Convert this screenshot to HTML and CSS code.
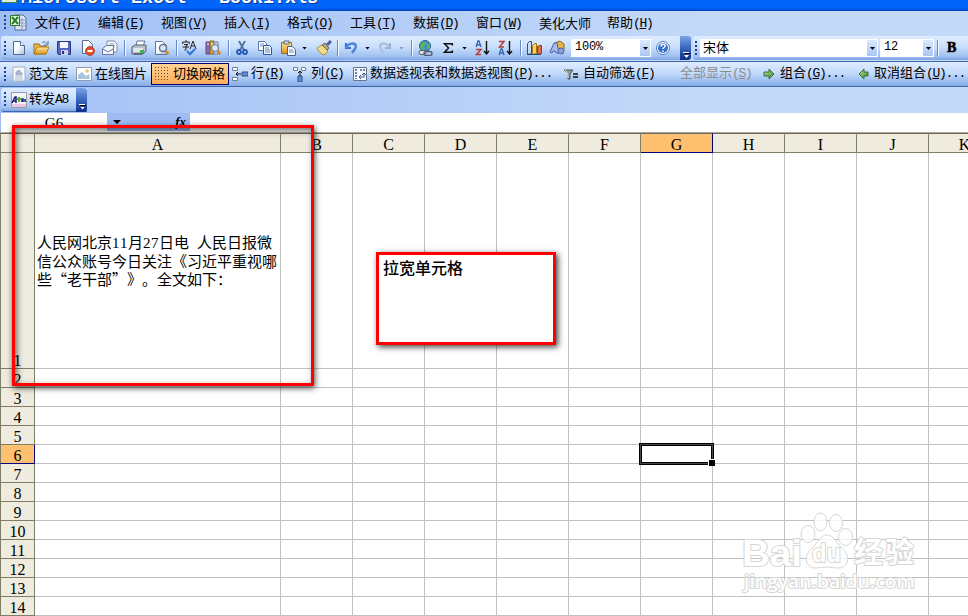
FILE: index.html
```html
<!DOCTYPE html>
<html lang="zh-CN">
<head>
<meta charset="utf-8">
<title>Microsoft Excel - Book1.xls</title>
<link rel="stylesheet" href="styles.css">
</head>
<body>
<svg width="0" height="0" class="defs">
  <defs>
    <linearGradient id="page" x1="0" y1="0" x2="1" y2="1"><stop offset=".4" stop-color="#fff"/><stop offset="1" stop-color="#a9bede"/></linearGradient>
    <linearGradient id="gold" x1="0" y1="0" x2="0" y2="1"><stop offset="0" stop-color="#ffe79a"/><stop offset="1" stop-color="#dc941e"/></linearGradient>
    <linearGradient id="arrow" x1="0" y1="0" x2="1" y2="1"><stop offset="0" stop-color="#b4dca0"/><stop offset="1" stop-color="#3a8a2a"/></linearGradient>
  </defs>
</svg>
<div class="window">
  <header class="title"><span class="title-icon"></span><span class="title-text">Microsoft Excel - Book1.xls</span></header>

  <nav class="menu">
    <i class="grip"></i>
    <svg class="book" width="18" height="18" viewBox="0 0 18 18"><path d="M6 1h8l3 3v12H6z" fill="#dce6f6" stroke="#5a6c94"/><path d="M10 6h6M10 9h6M10 12h6M13 4v11" stroke="#8a9cc2"/><path d="M1.500 1.500h9v10h-9z" fill="#eaf6e6" stroke="#2c7a2c"/><path d="M3 3l6 7M9 3l-6 7" stroke="#238023" stroke-width="2"/></svg>
    <span class="m">文件<b>(<u>F</u>)</b></span><span class="m">编辑<b>(<u>E</u>)</b></span><span class="m">视图<b>(<u>V</u>)</b></span><span class="m">插入<b>(<u>I</u>)</b></span><span class="m">格式<b>(<u>O</u>)</b></span><span class="m">工具<b>(<u>T</u>)</b></span><span class="m">数据<b>(<u>D</u>)</b></span><span class="m">窗口<b>(<u>W</u>)</b></span><span class="m wide">美化大师</span><span class="m">帮助<b>(<u>H</u>)</b></span>
  </nav>

  <div class="bars">
    <div class="bar standard">
      <i class="grip"></i>
      <div class="tools">
        <svg viewBox="0 0 16 16"><path d="M1.500 1.500h7l4 4v9h-11z" fill="url(#page)" stroke="#536a94"/><path d="M8.500 1.500v4h4" fill="#fff" stroke="#536a94"/></svg>
        <svg viewBox="0 0 16 16"><path d="M1 14V4h5l1 2h6v8z" fill="#f0bd4c" stroke="#9c6c10"/><path d="M1 14l3-7h12l-3 7z" fill="url(#gold)" stroke="#b07c1c"/><path d="M9 3c2-2 4-1 5 1M15 1v4h-4" fill="none" stroke="#4f6f9c"/></svg>
        <svg viewBox="0 0 16 16"><path d="M.500 1.500h13v13h-12l-1-1z" fill="#5967c0" stroke="#2c3480"/><path d="M3 2h8v6H3z" fill="#f4f6ff"/><path d="M4 10h7v5H4z" fill="#ccd2ec"/><path d="M5 11h2v3H5z" fill="#29306c"/></svg>
        <svg viewBox="0 0 16 16"><path d="M1.500 .500h6l4 4v9h-10z" fill="url(#page)" stroke="#5a6a8a"/><circle cx="9" cy="11" r="4.300" fill="#e25424" stroke="#b42c10"/><path d="M6.500 11h5" stroke="#fff" stroke-width="2"/></svg>
        <svg viewBox="0 0 16 16"><path d="M5 6V1h7l3 3v8h-4" fill="#fff" stroke="#7e8ca8"/><path d="M7 4h5M7 6h6" stroke="#8e9cba"/><path d="M.500 8.500l4-3h7v9h-11z" fill="#f2f4fa" stroke="#68779a"/><path d="M1 9l5 3 5-3" fill="none" stroke="#68779a"/></svg>
        <i class="sep"></i>
        <svg viewBox="0 0 16 16"><path d="M5 6l1-5h8l-2 5" fill="#fff" stroke="#67799a"/><path d="M1 7l3-2h11v6l-3 3H1z" fill="#b8c0ca" stroke="#555e70"/><path d="M2 8h10v4H2z" fill="#e3e7ee"/><path d="M9 10h4v3H9z" fill="#3eb548"/><path d="M3 14h8" stroke="#444"/></svg>
        <svg viewBox="0 0 16 16"><path d="M1.500 1.500h7l4 4v9h-11z" fill="url(#page)" stroke="#60749a"/><circle cx="9" cy="8" r="3.500" fill="#d6eafc" stroke="#66758e" stroke-width="1.500"/><path d="M11.500 11l3 3" stroke="#cf8a2c" stroke-width="2.500"/></svg>
        <i class="sep"></i>
        <svg viewBox="0 0 16 16"><path d="M4 0v2M.700 4V2h6.500v2M2 4.500h4L4 6v4H2.500M.500 7h6.500M8 9l3-8 3 8M9 6h4" fill="none" stroke="#222" stroke-width="1"/><path d="M5 11l3 3 5-5" fill="none" stroke="#3b78d6" stroke-width="2.300"/></svg>
        <svg viewBox="0 0 16 16"><path d="M1 2h4v12H1z" fill="#8a6cb4" stroke="#5c4480"/><path d="M5 1h4v13H5z" fill="#d4a63c" stroke="#8c681c"/><path d="M9 2h4v12H9z" fill="#cfd8ec" stroke="#6c7ca4"/><path d="M2 4h2M6 4h2" stroke="#fff"/><circle cx="10" cy="8" r="3.500" fill="#d6eafc" stroke="#66758e"/><path d="M12.500 11l3 3" stroke="#cf8a2c" stroke-width="2.500"/></svg>
        <i class="sep"></i>
        <svg viewBox="0 0 16 16"><path d="M5 1l5 9M11 1L6 10" stroke="#53719e" stroke-width="1.800"/><circle cx="5" cy="12" r="2" fill="none" stroke="#2755b4" stroke-width="1.800"/><circle cx="11" cy="12" r="2" fill="none" stroke="#2755b4" stroke-width="1.800"/></svg>
        <svg viewBox="0 0 16 16"><path d="M1.500 1.500h6l2 2v7h-8z" fill="#fff" stroke="#5577ae"/><path d="M6.500 5.500h6l2 2v7h-8z" fill="#eef4ff" stroke="#31589c"/><path d="M3 4h4M3 6h3M8 8h4M8 10h5M8 12h5" stroke="#6a8cc4"/></svg>
        <svg viewBox="0 0 16 16"><path d="M1.500 2.500h10v11h-10z" fill="url(#gold)" stroke="#9a6c20"/><path d="M4 1h5v3H4z" fill="#d7dbe4" stroke="#636a78"/><path d="M7.500 6.500h5l3 3v6h-8z" fill="#f4f7ff" stroke="#46639a"/><path d="M9 10h4M9 12h5" stroke="#6a8cc4"/></svg>
        <i class="caret"></i>
        <svg viewBox="0 0 16 16"><path d="M0 8l5-3 6 6-4 4C4 14 2 12 0 8z" fill="#f4dc8a" stroke="#b48a34"/><path d="M5 5l3-2 4 5-2 2z" fill="#b8aa88" stroke="#756a4c"/><path d="M10 5l4-4" stroke="#525ea2" stroke-width="3"/></svg>
        <i class="sep"></i>
        <svg viewBox="0 0 16 16"><path d="M3 3v5h5" fill="none" stroke="#3c6fd0" stroke-width="2.200"/><path d="M3 8c2-5 9-6 10-2 0 3-2 4-4 7" fill="none" stroke="#5283dc" stroke-width="2.400"/></svg>
        <i class="caret"></i>
        <svg viewBox="0 0 16 16"><path d="M12 3v5H7" fill="none" stroke="#9cb0d0" stroke-width="2"/><path d="M12 8C10 3 3 2 2 6c0 3 2 4 3 7" fill="none" stroke="#a9bad8" stroke-width="2"/></svg>
        <i class="caret dim"></i>
        <i class="sep"></i>
        <svg viewBox="0 0 16 16"><circle cx="8" cy="6" r="5.500" fill="#428bd4" stroke="#2b5d9c"/><path d="M4 3l4-2 1 4-3 1 2 3-3 1-2-4zM10 3l3 2v4l-3-1z" fill="#5bb850"/><rect x="2" y="10.500" width="7" height="4" rx="2" fill="#dfe6f0" stroke="#515c6c"/><rect x="7" y="11.500" width="8" height="4" rx="2" fill="none" stroke="#515c6c" stroke-width="1.300"/></svg>
        <svg viewBox="0 0 16 16"><path d="M11.300 5.500V3.700H3.500L7.500 8l-4 4.300h7.800v-1.800" fill="none" stroke="#111" stroke-width="1.500"/></svg>
        <i class="caret"></i>
        <svg viewBox="0 0 16 16"><path d="M2 7l2-6h1l2 6M3 5h3" fill="none" stroke="#3566ae" stroke-width="1.300"/><path d="M2 9.500h5l-4.500 5H7" fill="none" stroke="#b43c34" stroke-width="1.500"/><path d="M12.500 1v13M10 11l2.500 3 2.500-3" fill="none" stroke="#111" stroke-width="1.400"/></svg>
        <svg viewBox="0 0 16 16"><path d="M2 1.500h5L2.500 7H7" fill="none" stroke="#b43c34" stroke-width="1.500"/><path d="M2 15l2-6h1l2 6M3 13h3" fill="none" stroke="#3566ae" stroke-width="1.300"/><path d="M12.500 1v13M10 11l2.500 3 2.500-3" fill="none" stroke="#111" stroke-width="1.400"/></svg>
        <i class="sep"></i>
        <svg viewBox="0 0 16 16"><path d="M1.500 3.500l2-2h2v12l-4 1z" fill="#c8dcf8" stroke="#2c4d92"/><path d="M6.500 5.500l2-2h2v10l-4 1z" fill="#f5d55a" stroke="#a67616"/><path d="M11.500 6.500l2-1h2v8l-4 1z" fill="#e26d40" stroke="#9c3818"/><path d="M1 14.500h14" stroke="#27457e"/></svg>
        <svg viewBox="0 0 16 16"><path d="M6 3l5-2 4 3v6l-5 3z" fill="#e2b34c" stroke="#8e6820"/><path d="M1 12l4-9h3l2 10H7l-1-2H4l-1 2z" fill="#aabbf0" stroke="#4e5fae"/><circle cx="12" cy="11" r="3" fill="#8c9ed8" stroke="#5666a4"/></svg>
        <div class="combo">100%<i class="drop"></i></div>
        <svg class="help" viewBox="0 0 16 16"><circle cx="8" cy="8" r="6.500" fill="#fff" stroke="#4d76c0"/><circle cx="8" cy="8" r="5" fill="#3570d0"/><path d="M6 6.500c0-3 4-3 4-.500 0 1.500-2 1.500-2 3M8 10.500v1.500" stroke="#fff" stroke-width="1.500" fill="none"/></svg>
      </div>
      <i class="more"></i>
    </div>
    <div class="bar format">
      <i class="grip"></i>
      <div class="combo font">宋体<i class="drop"></i></div>
      <div class="combo size">12<i class="drop"></i></div>
      <i class="sep"></i><span class="bold">B</span>
    </div>
  </div>

  <div class="commands">
    <i class="grip"></i>
    <div class="items">
      <svg viewBox="0 0 16 16"><path d="M1 1h12v14H1z" fill="#f8fafc" stroke="#a8b0ba"/><path d="M4 9V6l3-2 3 3v2zM3 11h8M3 13h8" fill="#a5bcd2" stroke="#90a6bc" stroke-width=".800"/></svg><span>范文库</span>
      <svg viewBox="0 0 16 16"><path d="M.500 1.500h15v13H.500z" fill="#fff" stroke="#8e9baa"/><path d="M2 13V9l4-3 4 4 3-2 1 5z" fill="#a8c6df"/><circle cx="11" cy="5" r="1.800" fill="#eec46e"/></svg><span>在线图片</span>
      <div class="active"><i class="dots"></i><span>切换网格</span></div>
      <svg viewBox="0 0 16 16"><path d="M.500 1.500h5v3h-5zM.500 11.500h5v3h-5z" fill="#fff" stroke="#6f8194"/><path d="M10 6h6v4h-6z" fill="#5b8fdc" stroke="#33507c"/><path d="M4 8h5M6 6L4 8l2 2" fill="none" stroke="#111"/></svg><span>行<b>(<u>R</u>)</b></span>
      <svg viewBox="0 0 16 16"><path d="M.500 1.500h4v3h-4zM8.500 1.500h4v3h-4z" fill="#fff" stroke="#6f8194"/><path d="M5 10h4v6H5z" fill="#5b8fdc" stroke="#33507c"/><path d="M7 5v5M5 7l2-2 2 2" fill="none" stroke="#111"/></svg><span>列<b>(<u>C</u>)</b></span>
      <svg viewBox="0 0 16 16"><path d="M.500 1.500h13v13H.500z" fill="#f4f8ff" stroke="#62748c"/><path d="M2 4h3M7 4h5M3 6v7" stroke="#6d84ac" stroke-width="2" stroke-dasharray="2 1"/><path d="M6 11h5V7M9 9l2-2 2 2M8 9l-2 2 2 2" fill="none" stroke="#3a5788"/></svg><span>数据透视表和数据透视图<b>(<u>P</u>)...</b></span>
      <svg viewBox="0 0 16 16"><path d="M1 4h9L7 8v5H5V8z" fill="#8d969a" stroke="#4e5658"/><path d="M2 4l3 4v4" fill="none" stroke="#eee"/><path d="M10 8h5M10 11h5" stroke="#111" stroke-width="1.500"/></svg><span>自动筛选<b>(<u>F</u>)</b></span>
      <span class="disabled">全部显示<b>(<u>S</u>)</b></span>
      <svg viewBox="0 0 16 16"><path d="M1 6h5V3l5 5-5 5v-3H1z" fill="url(#arrow)" stroke="#386c38"/></svg><span>组合<b>(<u>G</u>)...</b></span>
      <svg viewBox="0 0 16 16"><path d="M11 6H7V3L2 8l5 5v-3h4z" fill="url(#arrow)" stroke="#386c38"/></svg><span>取消组合<b>(<u>U</u>)...</b></span>
    </div>
  </div>

  <div class="extra">
    <div class="bar convert"><i class="grip"></i>
      <svg width="16" height="16" viewBox="0 0 16 16"><path d="M.500 .500h15v15H.500z" fill="#f4f2fa" stroke="#949aa8"/><path d="M1 12h14v3H1z" fill="#ecc4e4"/><path d="M1 11l3-6h1v6M2 9h3M11 10V7h1v3M14 10V7" fill="none" stroke="#1b1b80" stroke-width="1.500"/><path d="M8 5v5M6 7h4" stroke="#56b428" stroke-width="2"/></svg>
      <span>转发<b>A8</b></span><i class="more"></i></div>
  </div>

  <div class="formula"><div class="name">G6</div><div class="fx"><i class="caret big"></i><em>fx</em></div></div>

  <table class="sheet">
    <colgroup><col class="ch"><col class="ca"><col><col><col><col><col><col><col><col><col><col></colgroup>
    <tr class="head"><th></th><th>A</th><th>B</th><th>C</th><th>D</th><th>E</th><th>F</th><th class="on">G</th><th>H</th><th>I</th><th>J</th><th>K</th></tr>
    <tr class="tall"><th>1</th><td class="news">人民网北京<b>11</b>月<b>27</b>日电<b class="gap"></b>人民日报微<br>信公众账号今日关注《习近平重视哪<br>些“老干部”》。全文如下：</td>
      <td></td><td></td><td></td><td></td><td></td>
      <td></td><td></td><td></td><td></td><td></td></tr>
    <tr><th>2</th><td></td><td></td><td></td><td></td><td></td><td></td><td></td><td></td><td></td><td></td><td></td></tr>
    <tr><th>3</th><td></td><td></td><td></td><td></td><td></td><td></td><td></td><td></td><td></td><td></td><td></td></tr>
    <tr><th>4</th><td></td><td></td><td></td><td></td><td></td><td></td><td></td><td></td><td></td><td></td><td></td></tr>
    <tr><th>5</th><td></td><td></td><td></td><td></td><td></td><td></td><td></td><td></td><td></td><td></td><td></td></tr>
    <tr><th class="on">6</th><td></td><td></td><td></td><td></td><td></td><td></td>
      <td class="selected"><i class="cursor"></i></td>
      <td></td><td></td><td></td><td></td></tr>
    <tr><th>7</th><td></td><td></td><td></td><td></td><td></td><td></td><td></td><td></td><td></td><td></td><td></td></tr>
    <tr><th>8</th><td></td><td></td><td></td><td></td><td></td><td></td><td></td><td></td><td></td><td></td><td></td></tr>
    <tr><th>9</th><td></td><td></td><td></td><td></td><td></td><td></td><td></td><td></td><td></td><td></td><td></td></tr>
    <tr><th>10</th><td></td><td></td><td></td><td></td><td></td><td></td><td></td><td></td><td></td><td></td><td></td></tr>
    <tr><th>11</th><td></td><td></td><td></td><td></td><td></td><td></td><td></td><td></td><td></td><td></td><td></td></tr>
    <tr><th>12</th><td></td><td></td><td></td><td></td><td></td><td></td><td></td><td></td><td></td><td></td><td></td></tr>
    <tr><th>13</th><td></td><td></td><td></td><td></td><td></td><td></td><td></td><td></td><td></td><td></td><td></td></tr>
    <tr><th>14</th><td></td><td></td><td></td><td></td><td></td><td></td><td></td><td></td><td></td><td></td><td></td></tr>
  </table>

  <div class="mark region"></div>
  <div class="mark note">拉宽单元格</div>
  <svg class="watermark" width="180" height="86" viewBox="0 0 180 86">
    <g fill="#fff" fill-opacity=".8" stroke="#d6d6d6" stroke-width="1">
      <ellipse cx="68" cy="26" rx="7" ry="8.500"/><ellipse cx="80.500" cy="14" rx="6.500" ry="9"/><ellipse cx="96" cy="15" rx="6.500" ry="8.500"/><ellipse cx="105.500" cy="29" rx="7" ry="8.500"/>
      <path d="M87 27c7 0 9 8 15 13 9 8 7 20-4 20-5 0-7-1-11-1s-7 1-11 1c-11 0-13-12-4-20 6-5 8-13 15-13z"/>
    </g>
    <g fill="#fff" stroke="#d6d6d6">
      <text class="bai" x="2" y="58" textLength="60" lengthAdjust="spacingAndGlyphs">Bai</text>
      <text class="du" x="72" y="54" textLength="29" lengthAdjust="spacingAndGlyphs">du</text>
      <text class="jy" x="114" y="55" textLength="60">经验</text>
      <text class="url" x="4" y="80" textLength="171" lengthAdjust="spacingAndGlyphs">jingyan.baidu.com</text>
    </g>
  </svg>
</div>
</body>
</html>
```

FILE: styles.css
```css
* { box-sizing: border-box; }
body { margin: 0; overflow: hidden; }
.defs { position: absolute; }
.window {
  position: relative; width: 968px; height: 616px; overflow: hidden; background: #fff;
  color: #000; font: 13px/16px "Noto Sans CJK SC", sans-serif;
}
svg { display: block; flex: none; }
b { font-family: "Liberation Mono", monospace; font-weight: 400; letter-spacing: -1.3px; }
u { text-underline-offset: 1px; }
span { white-space: nowrap; }

.title { height: 11px; display: flex; overflow: hidden; background: linear-gradient(#0263f8 0, #0066fe 7px, #0050d8 10px, #0038b4 11px); }
.title-icon { width: 16px; height: 3px; margin-left: 1px; background: #dff0d8; border: solid #448844; border-width: 0 1px 1px; }
.title-text { margin: -11px 0 0 4px; color: #fff; font: bold 18.34px/20px "Liberation Mono", monospace; white-space: pre; text-shadow: 1px 1px #0a3a9c; }

.menu { height: 25px; display: flex; align-items: center; background: linear-gradient(90deg, #9fbef5, #c4daf9 75%); padding: 0 0 2px 4px; }
.menu .m { width: 63px; flex: none; }
.menu .m.wide { width: 68px; }
.book { margin: 0 8px 0 3px; }
.grip { flex: none; width: 2px; height: 15px; background: repeating-linear-gradient(#27408f 0 2px, transparent 2px 4px); }

.bars { height: 25px; display: flex; background: linear-gradient(90deg, #a4c1f5, #c4daf9 75%); }
.bar { height: 24px; display: flex; align-items: center; background: linear-gradient(#dfecff 0, #c9dffc 45%, #a0c1f2 85%, #7ba4e0); border-radius: 3px 0 0 3px; }
.standard { width: 688px; flex: none; margin-left: 1px; padding-left: 3px; }
.tools {
  display: grid; align-items: center; width: 668px; margin-left: 6px; flex: none;
  grid-template-columns: 21px 24px 24px 21px 22px 7px 23px 22px 6px 23px 23px 6px 23px 23px 22px 15px 20px 6px 22px 13px 21px 12px 6px 24px 21px 12px 23px 23px 6px 23px 22px 84px 16px;
}
.tools svg { width: 16px; height: 16px; }
.sep { width: 2px; height: 16px; background: linear-gradient(90deg, #6a8ccb 50%, #f1f7ff 50%); }
.caret { width: 5px; height: 3px; background: #000; clip-path: polygon(0 0, 100% 0, 50% 100%); }
.caret.dim { background: #8d9ab2; }
.caret.big { width: 8px; height: 4px; }
.combo { position: relative; width: 80px; height: 18px; background: #fff; padding-left: 4px; font: 12px/17px "Liberation Mono", monospace; letter-spacing: -.2px; }
.drop { position: absolute; right: 1px; top: 1px; width: 10px; height: 16px; background: linear-gradient(#dceafe, #a9c6f2); }
.drop::after { content: ""; position: absolute; left: 3px; top: 7px; width: 5px; height: 3px; background: #000; clip-path: polygon(0 0, 100% 0, 50% 100%); }
.more { position: relative; width: 11px; height: 24px; margin-left: auto; flex: none; background: linear-gradient(#7aa3e8, #3966bc 50%, #0b2f8a); border-radius: 0 3px 3px 0; }
.more::before { content: ""; position: absolute; left: 3px; bottom: 7px; width: 6px; height: 1px; background: #fff; box-shadow: 1px 1px #000; }
.more::after { content: ""; position: absolute; left: 4px; bottom: 2px; width: 5px; height: 3px; background: #fff; clip-path: polygon(0 0, 100% 0, 50% 100%); }
.format { flex: 1; margin-left: 4px; padding-left: 1px; }
.format .combo.font { width: 178px; margin: 0 2px 0 3px; padding-left: 3px; font: 13px/15px "Noto Sans CJK SC", sans-serif; letter-spacing: 0; }
.format .combo.size { width: 54px; margin-right: 3px; }
.format .grip { margin-left: 1px; }
.bold { margin-left: 8px; font: 900 14px/16px "Liberation Serif", serif; -webkit-text-stroke: .6px #000; }

.commands { height: 26px; display: flex; align-items: center; padding-left: 4px; border: solid #3f65ad; border-width: 1px 0; background: linear-gradient(#dfecff, #c4dbfc 45%, #9dbef1 80%, #86abe4); }
.items {
  display: grid; align-items: center; margin-left: 6px;
  grid-template-columns: 17px 47px 19px 56px 81px 19px 42px 18px 42px 17px 193px 20px 97px 83px 17px 77px 17px 90px;
}
.items svg { width: 16px; height: 16px; }
.items span, .convert span { padding-bottom: 2px; }
.items .active { display: flex; align-items: center; width: 78px; height: 22px; padding: 0 2px 0 3px; border: 1px solid #000080; background: linear-gradient(#ffd394, #ffad58); }
.dots { width: 15px; height: 14px; margin-right: 3px; background: radial-gradient(circle at .5px .5px, #5c4c3c .8px, transparent 1px) 0 0 / 3px 3px; }
.items .disabled { color: #8d8d8d; }

.extra { height: 26px; background: linear-gradient(90deg, #a4c1f5, #c4daf9 75%); padding-top: 1px; }
.convert { width: 86px; margin-left: 1px; padding-left: 3px; border-bottom: 1px solid #3f65ad; }
.convert svg { margin: 0 2px 0 5px; }

.formula { height: 19px; display: flex; border-left: 1px solid #9ebcf2; }
.name { width: 106px; text-align: center; font: 15px/21px "Liberation Serif", serif; }
.fx { width: 83px; height: 18px; background: #9ebbf3; display: flex; align-items: center; justify-content: space-between; padding: 0 4px 0 6px; }
.fx em { font: italic bold 13px/16px "Liberation Serif", serif; }

.sheet { width: 1001px; table-layout: fixed; border-spacing: 0; border-top: 1px solid #aca899; }
.ch { width: 35px; }
.ca { width: 246px; }
col { width: 72px; }
.sheet tr { height: 19px; }
.sheet td, .sheet th { padding: 0; height: 19px; border: solid #c0c0c0; border-width: 0 1px 1px 0; }
.sheet th { background: #efebde; border-color: #7f7f68; font: 16px/15px "Liberation Serif", serif; padding-top: 3px; }
.sheet th:first-child { border-left: 1px solid #7f7f68; }
.sheet .head th { height: 20px; border-top: 1px solid #6d6b5c; }
.sheet .on { background: #ffc06f; border-color: #7f7f68 #000080 #000080 #7f7f68; }
.sheet .tall th, .sheet .tall td { height: 216px; }
.sheet .tall th { vertical-align: bottom; }
.sheet .news { font: 15px/18px "Noto Sans CJK SC", sans-serif; text-spacing-trim: space-all; font-kerning: none; padding-left: 2px; white-space: nowrap; vertical-align: middle; }
.news b { font-family: "Liberation Serif", serif; letter-spacing: .5px; }
.news .gap { display: inline-block; width: 8px; }
.selected { position: relative; }
.cursor { position: absolute; left: -2px; top: -2px; width: 75px; height: 22px; border: 3px solid #000; }
.cursor::before { content: ""; position: absolute; inset: -2px; border: 1px solid #484848; }
.cursor::after { content: ""; position: absolute; right: -4px; bottom: -4px; width: 6px; height: 6px; background: #000; border: solid #fff; border-width: 1px 0 0 1px; }

.mark { position: absolute; border: 3px solid #f00; }
.region { left: 12px; top: 125px; width: 302px; height: 261px; box-shadow: 1px 2px 6px rgba(0,0,0,.7), inset 2px 3px 6px rgba(0,0,0,.55); }
.note { left: 376px; top: 252px; width: 180px; height: 93px; padding: 3px 4px; background: #fff; font: 500 16px/18px "Noto Sans CJK SC", sans-serif; box-shadow: 2px 2px 6px rgba(0,0,0,.75); }
.watermark { position: absolute; left: 740px; top: 508px; }
.watermark text { paint-order: stroke; stroke-width: 2px; stroke-linejoin: round; }
.bai { font: bold 37px "Liberation Sans", sans-serif; }
.du { font: bold 25px "Liberation Sans", sans-serif; }
.jy { font: bold 29px "Noto Sans CJK SC", sans-serif; }
.url { font: 600 18px "Open Sans", sans-serif; }
```
